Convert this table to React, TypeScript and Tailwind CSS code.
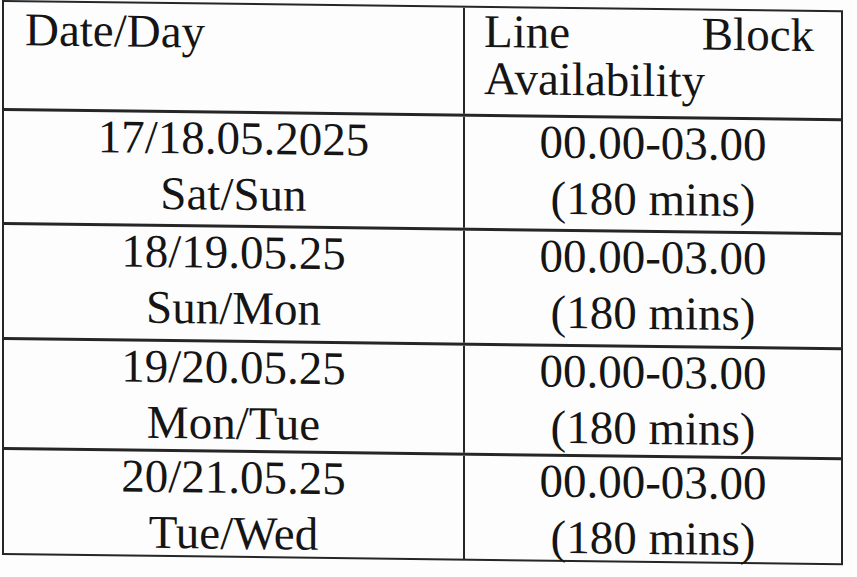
const rows = [
  { date: "17/18.05.2025", days: "Sat/Sun", h: "h-[114px]" },
  { date: "18/19.05.25", days: "Sun/Mon", h: "h-[115px]" },
  { date: "19/20.05.25", days: "Mon/Tue", h: "h-[110px]" },
  { date: "20/21.05.25", days: "Tue/Wed", h: "h-[106px]" },
];

function BlockRow({ date, days, h }: { date: string; days: string; h: string }) {
  return (
    <div className={`grid grid-cols-[459px_1fr] border-t-[3px] border-[#262626] ${h}`}>
      <div className="flex flex-col gap-2 text-center leading-[48px]">
        <div>{date}</div>
        <div>{days}</div>
      </div>
      <div className="flex flex-col gap-2 border-l-2 border-[#262626] text-center leading-[48px]">
        <div>00.00-03.00</div>
        <div>(180 mins)</div>
      </div>
    </div>
  );
}

export default function App() {
  return (
    <div className="h-[577px] w-[857px] overflow-hidden bg-[#fdfdfd]">
      <div
        className="ml-[2px] w-[841px] origin-top-left skew-y-[0.7deg] border-2 border-[#262626] text-[47px] text-[#151515]"
        style={{ fontFamily: '"Liberation Serif", "Times New Roman", serif' }}
      >
        <div className="grid h-[106px] grid-cols-[459px_1fr]">
          <div className="pl-[21px] pt-[4px] leading-[47px]">Date/Day</div>
          <div className="border-l-2 border-[#262626] pl-[19px] pr-[27px] text-justify leading-[47px]">
            Line Block Availability
          </div>
        </div>
        {rows.map((row) => (
          <BlockRow key={row.date} {...row} />
        ))}
      </div>
    </div>
  );
}
